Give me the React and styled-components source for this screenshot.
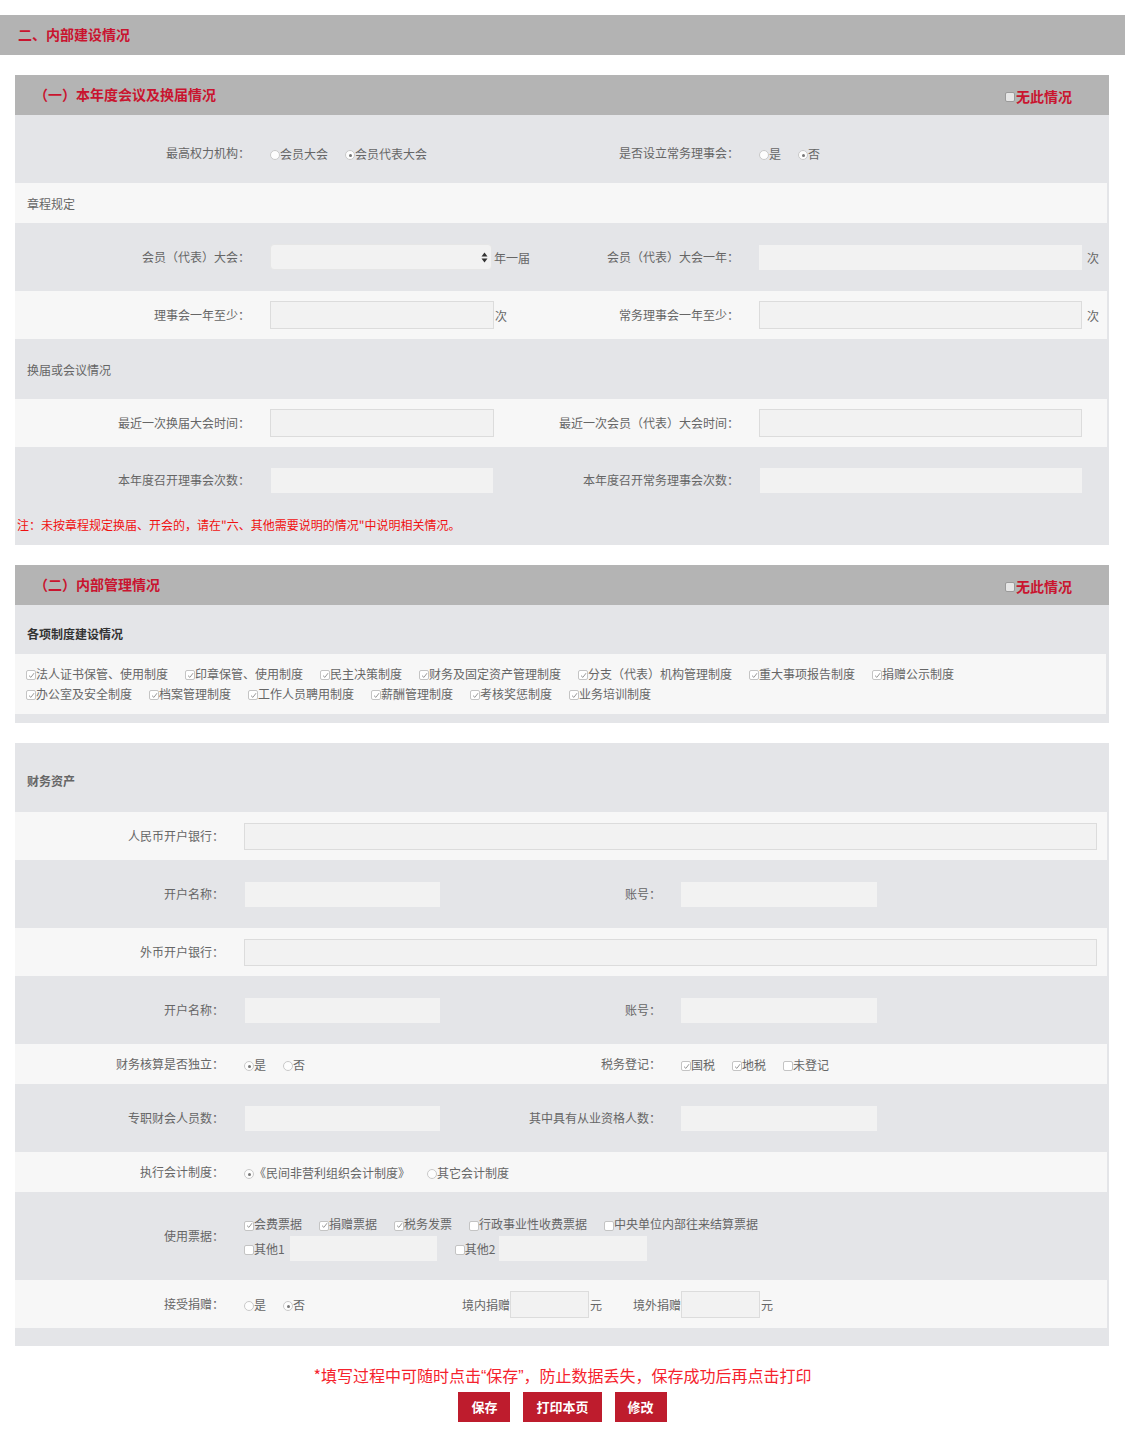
import React from "react";
import styled, { createGlobalStyle } from "styled-components";

const GlobalStyle = createGlobalStyle`
  body {
    margin: 0;
    background: #fff;
    font-family: "Noto Sans CJK SC", "Liberation Sans", sans-serif;
    font-size: 12px;
    color: #666;
  }
  * { box-sizing: border-box; }
`;

const RED = "#c9142f";

const Page = styled.div`
  padding: 15px 0 18px;
`;

const TopBar = styled.div`
  height: 40px;
  background: #b3b3b3;
  display: flex;
  align-items: center;
  padding: 0 0 2px 18px;
  color: ${RED};
  font-size: 14px;
  font-weight: bold;
`;

const Panel = styled.section`
  margin: 20px 16px 0 15px;
  background: #e4e5e8;
  padding-bottom: ${(p) => p.$pb || 0}px;
`;

const PanelHead = styled.div`
  height: 40px;
  background: #b4b4b4;
  display: flex;
  align-items: center;
  justify-content: space-between;
  padding: 0 37px 2px 19px;
`;

const HeadTitle = styled.h3`
  margin: 0;
  font-size: 14px;
  font-weight: bold;
  color: ${RED};
`;

const NoneCheck = styled.label`
  display: flex;
  align-items: center;
  color: ${RED};
  font-size: 14px;
  font-weight: bold;
  margin-top: 3px;
`;

const GreyBox = styled.span`
  width: 10px;
  height: 10px;
  border: 1px solid #9a9a9a;
  border-radius: 2px;
  background: #e6e6e6;
  margin: 3px 1px 0 0;
`;

const Row = styled.div`
  display: grid;
  grid-template-columns: ${(p) => p.$cols};
  align-items: center;
  height: ${(p) => p.$h}px;
  padding-top: ${(p) => p.$pt || 0}px;
  background: ${(p) => (p.$light ? "#f7f7f7" : "transparent")};
  margin-right: ${(p) => (p.$light ? 2 : 0)}px;
`;

const Label = styled.div`
  text-align: right;
  padding-right: 20px;
  padding-bottom: 2px;
  white-space: nowrap;
`;

const Cell = styled.div`
  display: flex;
  align-items: center;
  white-space: nowrap;
  grid-column: ${(p) => p.$span || "auto"};
  justify-content: ${(p) => p.$justify || "flex-start"};
`;

const Lines = styled.div`
  grid-column: 2 / -1;
  display: flex;
  flex-direction: column;
`;

const Line = styled.div`
  display: flex;
  align-items: center;
  min-height: ${(p) => p.$h || 20}px;
`;

const SubTitle = styled.div`
  grid-column: 1 / -1;
  padding-left: 12px;
  font-weight: ${(p) => (p.$bold ? "bold" : "normal")};
  color: ${(p) => p.$color || "#666"};
`;

const Field = styled.input`
  width: ${(p) => p.$w}px;
  height: ${(p) => (p.$bordered ? 28 : 25)}px;
  border: ${(p) => (p.$bordered ? "1px solid #dcdcdc" : "none")};
  background: #f2f2f2;
  margin: 0 ${(p) => p.$mr || 0}px 0 ${(p) => p.$ml || 0}px;
  padding: 0 4px;
  outline: none;
  font: inherit;
`;

const SelectBox = styled.div`
  width: 223px;
  height: 26px;
  border: 1px solid #e6e6e6;
  border-radius: 4px;
  background: #f2f2f2;
  display: flex;
  align-items: center;
  justify-content: flex-end;
  padding-right: 3px;
  margin-right: 2px;
`;

const Unit = styled.span`
  margin-left: ${(p) => p.$ml || 0}px;
`;

const Opt = styled.label`
  display: inline-flex;
  align-items: center;
  margin-right: ${(p) => (p.$mr === undefined ? 17 : p.$mr)}px;
  white-space: nowrap;
`;

const Box = styled.span`
  width: 10px;
  height: 10px;
  border: 1px solid #c4c4c4;
  border-radius: 2px;
  background: #fff;
  display: inline-flex;
  align-items: center;
  justify-content: center;
  margin-top: 4px;
  flex-shrink: 0;
`;

const Dot = styled.span`
  width: 10px;
  height: 10px;
  border: 1px solid #c9c9c9;
  border-radius: 50%;
  background: #fdfdfd;
  display: inline-flex;
  align-items: center;
  justify-content: center;
  margin-top: 4px;
  flex-shrink: 0;
  &::after {
    content: "";
    width: 3px;
    height: 3px;
    border-radius: 50%;
    background: ${(p) => (p.$on ? "#777" : "transparent")};
  }
`;

const Note = styled.div`
  padding: 3px 2px 0;
  height: 31px;
  color: #f01010;
  line-height: 16px;
`;

const Boxes = styled.div`
  background: #f7f7f7;
  margin-right: 3px;
  padding: 9px 11px 11px;
`;

const Footer = styled.div`
  margin-top: 18px;
  text-align: center;
`;

const Tip = styled.div`
  color: #f5222d;
  font-size: 16px;
  line-height: 22px;
`;

const Quote = styled.span`
  font-family: "Liberation Sans", sans-serif;
`;

const Buttons = styled.div`
  display: flex;
  justify-content: center;
  gap: 13px;
  margin-top: 4px;
`;

const Button = styled.button`
  height: 30px;
  padding: 0 13px 1px;
  border: none;
  background: #be1c2d;
  color: #fff;
  font: inherit;
  font-size: 13px;
  font-weight: bold;
  cursor: pointer;
`;

const Check = ({ on, children, mr }) => (
  <Opt $mr={mr}>
    <Box>
      {on && (
        <svg width="7" height="7" viewBox="0 0 7 7">
          <path d="M1 3.6 L2.9 5.4 L6 1.2" stroke="#999" strokeWidth="1" fill="none" />
        </svg>
      )}
    </Box>
    {children}
  </Opt>
);

const Radio = ({ on, children, mr }) => (
  <Opt $mr={mr}>
    <Dot $on={on} />
    {children}
  </Opt>
);

const Arrows = () => (
  <svg width="7" height="11" viewBox="0 0 7 11">
    <path d="M3.5 0.5 L6.5 4.5 L0.5 4.5 Z" fill="#333" />
    <path d="M3.5 10.5 L6.5 6.5 L0.5 6.5 Z" fill="#333" />
  </svg>
);

const C1 = "255px 260px 229px 1fr";
const C3 = "229px 216px 221px 1fr";

const rules1 = [
  "法人证书保管、使用制度",
  "印章保管、使用制度",
  "民主决策制度",
  "财务及固定资产管理制度",
  "分支（代表）机构管理制度",
  "重大事项报告制度",
  "捐赠公示制度",
];
const rules2 = ["办公室及安全制度", "档案管理制度", "工作人员聘用制度", "薪酬管理制度", "考核奖惩制度", "业务培训制度"];

export default function App() {
  return (
    <Page>
      <GlobalStyle />
      <TopBar>二、内部建设情况</TopBar>

      <Panel>
        <PanelHead>
          <HeadTitle>（一）本年度会议及换届情况</HeadTitle>
          <NoneCheck>
            <GreyBox />
            无此情况
          </NoneCheck>
        </PanelHead>

        <Row $cols={C1} $h={68} $pt={8}>
          <Label>最高权力机构：</Label>
          <Cell>
            <Radio>会员大会</Radio>
            <Radio on>会员代表大会</Radio>
          </Cell>
          <Label>是否设立常务理事会：</Label>
          <Cell>
            <Radio>是</Radio>
            <Radio on>否</Radio>
          </Cell>
        </Row>

        <Row $cols="1fr" $h={40} $light>
          <SubTitle>章程规定</SubTitle>
        </Row>

        <Row $cols={C1} $h={68}>
          <Label>会员（代表）大会：</Label>
          <Cell>
            <SelectBox>
              <Arrows />
            </SelectBox>
            年一届
          </Cell>
          <Label>会员（代表）大会一年：</Label>
          <Cell>
            <Field $w={323} />
            <Unit $ml={5}>次</Unit>
          </Cell>
        </Row>

        <Row $cols={C1} $h={48} $light>
          <Label>理事会一年至少：</Label>
          <Cell>
            <Field $w={224} $bordered />
            <Unit $ml={1}>次</Unit>
          </Cell>
          <Label>常务理事会一年至少：</Label>
          <Cell>
            <Field $w={323} $bordered />
            <Unit $ml={5}>次</Unit>
          </Cell>
        </Row>

        <Row $cols="1fr" $h={60}>
          <SubTitle>换届或会议情况</SubTitle>
        </Row>

        <Row $cols={C1} $h={48} $light>
          <Label>最近一次换届大会时间：</Label>
          <Cell>
            <Field $w={224} $bordered />
          </Cell>
          <Label>最近一次会员（代表）大会时间：</Label>
          <Cell>
            <Field $w={323} $bordered />
          </Cell>
        </Row>

        <Row $cols={C1} $h={67}>
          <Label>本年度召开理事会次数：</Label>
          <Cell>
            <Field $w={222} $ml={1} />
          </Cell>
          <Label>本年度召开常务理事会次数：</Label>
          <Cell>
            <Field $w={322} $ml={1} />
          </Cell>
        </Row>

        <Note>注：未按章程规定换届、开会的，请在"六、其他需要说明的情况"中说明相关情况。</Note>
      </Panel>

      <Panel $pb={9}>
        <PanelHead>
          <HeadTitle>（二）内部管理情况</HeadTitle>
          <NoneCheck>
            <GreyBox />
            无此情况
          </NoneCheck>
        </PanelHead>
        <Row $cols="1fr" $h={49} $pt={7}>
          <SubTitle $bold $color="#333">
            各项制度建设情况
          </SubTitle>
        </Row>
        <Boxes>
          <Line>
            {rules1.map((r) => (
              <Check key={r} on>
                {r}
              </Check>
            ))}
          </Line>
          <Line>
            {rules2.map((r) => (
              <Check key={r} on>
                {r}
              </Check>
            ))}
          </Line>
        </Boxes>
      </Panel>

      <Panel $pb={18}>
        <Row $cols="1fr" $h={69} $pt={6}>
          <SubTitle $bold>财务资产</SubTitle>
        </Row>

        <Row $cols={C3} $h={48} $light>
          <Label>人民币开户银行：</Label>
          <Cell $span="2 / -1">
            <Field $w={853} $bordered style={{ height: 27 }} />
          </Cell>
        </Row>

        <Row $cols={C3} $h={68}>
          <Label>开户名称：</Label>
          <Cell>
            <Field $w={195} $ml={1} />
          </Cell>
          <Label>账号：</Label>
          <Cell>
            <Field $w={196} />
          </Cell>
        </Row>

        <Row $cols={C3} $h={48} $light>
          <Label>外币开户银行：</Label>
          <Cell $span="2 / -1">
            <Field $w={853} $bordered style={{ height: 27 }} />
          </Cell>
        </Row>

        <Row $cols={C3} $h={68}>
          <Label>开户名称：</Label>
          <Cell>
            <Field $w={195} $ml={1} />
          </Cell>
          <Label>账号：</Label>
          <Cell>
            <Field $w={196} />
          </Cell>
        </Row>

        <Row $cols={C3} $h={40} $light>
          <Label>财务核算是否独立：</Label>
          <Cell>
            <Radio on>是</Radio>
            <Radio>否</Radio>
          </Cell>
          <Label>税务登记：</Label>
          <Cell>
            <Check on>国税</Check>
            <Check on>地税</Check>
            <Check>未登记</Check>
          </Cell>
        </Row>

        <Row $cols={C3} $h={68}>
          <Label>专职财会人员数：</Label>
          <Cell>
            <Field $w={195} $ml={1} />
          </Cell>
          <Label>其中具有从业资格人数：</Label>
          <Cell>
            <Field $w={196} />
          </Cell>
        </Row>

        <Row $cols={C3} $h={40} $light>
          <Label>执行会计制度：</Label>
          <Cell $span="2 / -1">
            <Radio on>《民间非营利组织会计制度》</Radio>
            <Radio>其它会计制度</Radio>
          </Cell>
        </Row>

        <Row $cols={C3} $h={88}>
          <Label>使用票据：</Label>
          <Lines>
            <Line $h={24}>
              <Check on>会费票据</Check>
              <Check on>捐赠票据</Check>
              <Check on>税务发票</Check>
              <Check>行政事业性收费票据</Check>
              <Check>中央单位内部往来结算票据</Check>
            </Line>
            <Line $h={25}>
              <Check mr={0}>其他1</Check>
              <Field $w={147} $ml={5} $mr={18} />
              <Check mr={0}>其他2</Check>
              <Field $w={148} $ml={4} />
            </Line>
          </Lines>
        </Row>

        <Row $cols={C3} $h={48} $light>
          <Label>接受捐赠：</Label>
          <Cell>
            <Radio>是</Radio>
            <Radio on>否</Radio>
          </Cell>
          <Cell $justify="space-between">
            <Cell>
              <Unit $ml={2}>境内捐赠</Unit>
              <Field $w={79} $bordered style={{ height: 27 }} />
              <Unit $ml={1}>元</Unit>
            </Cell>
            <span>境外捐赠</span>
          </Cell>
          <Cell>
            <Field $w={79} $bordered style={{ height: 27 }} />
            <Unit $ml={1}>元</Unit>
          </Cell>
        </Row>
      </Panel>

      <Footer>
        <Tip>
          *填写过程中可随时点击<Quote>“</Quote>保存<Quote>”</Quote>，防止数据丢失，保存成功后再点击打印
        </Tip>
        <Buttons>
          <Button>保存</Button>
          <Button>打印本页</Button>
          <Button>修改</Button>
        </Buttons>
      </Footer>
    </Page>
  );
}
